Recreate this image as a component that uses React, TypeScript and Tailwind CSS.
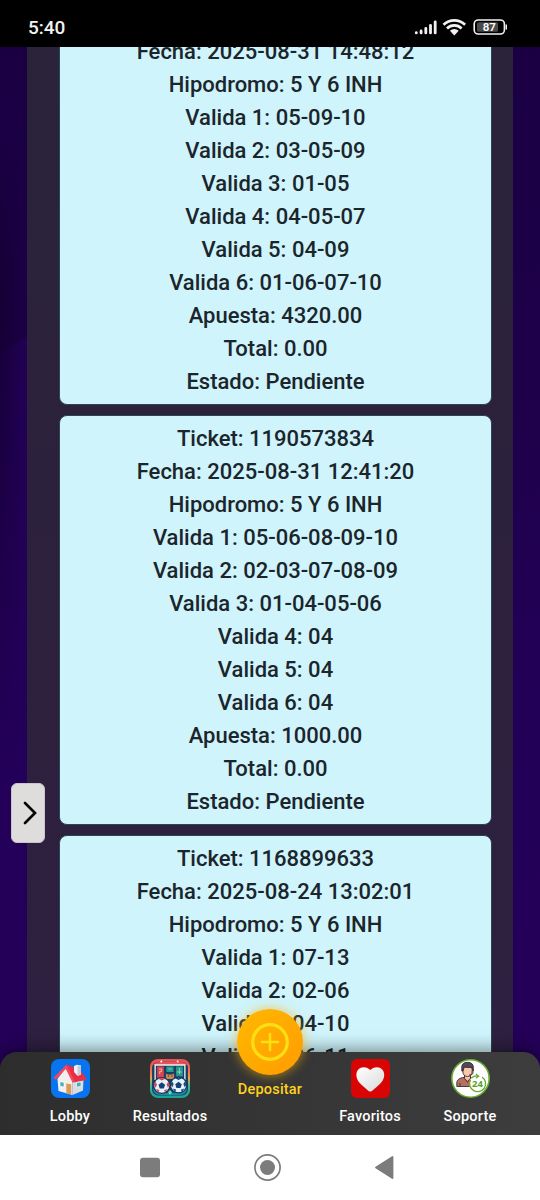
import React from "react";

const tickets: string[][] = [
  [
    "Fecha: 2025-08-31 14:48:12",
    "Hipodromo: 5 Y 6 INH",
    "Valida 1: 05-09-10",
    "Valida 2: 03-05-09",
    "Valida 3: 01-05",
    "Valida 4: 04-05-07",
    "Valida 5: 04-09",
    "Valida 6: 01-06-07-10",
    "Apuesta: 4320.00",
    "Total: 0.00",
    "Estado: Pendiente",
  ],
  [
    "Ticket: 1190573834",
    "Fecha: 2025-08-31 12:41:20",
    "Hipodromo: 5 Y 6 INH",
    "Valida 1: 05-06-08-09-10",
    "Valida 2: 02-03-07-08-09",
    "Valida 3: 01-04-05-06",
    "Valida 4: 04",
    "Valida 5: 04",
    "Valida 6: 04",
    "Apuesta: 1000.00",
    "Total: 0.00",
    "Estado: Pendiente",
  ],
  [
    "Ticket: 1168899633",
    "Fecha: 2025-08-24 13:02:01",
    "Hipodromo: 5 Y 6 INH",
    "Valida 1: 07-13",
    "Valida 2: 02-06",
    "Valida 3: 04-10",
    "Valida 4: 06-11",
  ],
];

function StatusIcons() {
  return (
    <svg width="94" height="20" viewBox="413 17 94 20" fill="none">
      <g stroke="#f2f2f2" strokeWidth="2.8" strokeLinecap="round">
        <path d="M416.3 32.6v.3M421.1 31v1.9M425.8 28.3v4.6M430.5 25.3v7.6M435.2 21.8v11.1" />
      </g>
      <g stroke="#f2f2f2" strokeWidth="2.7">
        <path d="M443.5 24.7a15.5 15.5 0 0 1 21.6 0" />
        <path d="M447 28.5a10.3 10.3 0 0 1 14.6 0" />
      </g>
      <path d="M449.9 30.8a6.3 6.3 0 0 1 8.8 0l-4.4 4.7z" fill="#f2f2f2" />
      <rect x="474.2" y="20" width="30.2" height="14" rx="4" stroke="#f2f2f2" strokeWidth="1.6" />
      <rect x="477" y="22.3" width="21" height="9.4" rx="1.5" fill="#4a4a4a" />
      <path d="M506.4 24.5v5" stroke="#f2f2f2" strokeWidth="1.7" />
      <text x="489.3" y="31.1" textAnchor="middle" fill="#fff" fontSize="11.5" fontWeight="600" fontFamily="Roboto, sans-serif">87</text>
    </svg>
  );
}

function HouseIcon() {
  return (
    <svg width="39" height="39" viewBox="0 0 39 39">
      <rect width="39" height="39" rx="8" fill="#0874ef" />
      <path d="M14.500 9L6.500 20L7.500 32L21.500 36V21z" fill="#f3efec" />
      <path d="M21.500 21L32.500 20L32 31.500L21.500 36z" fill="#dcdadd" />
      <path d="M15.500 5.500L29 10.500L36 20.800L22.500 23.500z" fill="#e92f48" />
      <path d="M15.500 5.500L2.300 19L5 20.500L14.800 10L21.500 23.600L23.800 22.800z" fill="#f5475a" />
      <path d="M23 7l3-1.300 4 .8v9.300l-3.500 1L23 13z" fill="#eef1f6" />
      <path d="M26.500 7.500l3.500-1v9.300l-3.500 1z" fill="#c5cbd8" />
      <path d="M15.300 24.500l5 .8V35.500l-5-1.300z" fill="#dc9a58" />
      <path d="M9 22.700l4 .7v4.500l-4-.8zM25.500 23.600l4.500-.7v4.400l-4.500.9z" fill="#47aeb9" stroke="#fff" strokeWidth=".6" />
    </svg>
  );
}

function Ball({ x, y, c }: { x: number; y: number; c: string }) {
  return (
    <g transform={`translate(${x} ${y})`}>
      <circle r="7.900" fill="#e3f3f8" stroke="#123262" strokeWidth="1.100" />
      <path d="M0-3.200L3.200-.8L2 2.900H-2L-3.200-.8z" fill="#173f78" />
      <path d="M-3.600-6.800L0-7.600l3.600.8L0-4.900zM6.500-4l1.200 3.600L6 2.300 4.700-1zM-6.500-4l-1.200 3.600L-6 2.300-4.700-1zM2.400 4.400l3.300-.8-2.500 3.700zM-2.400 4.400l-3.300-.8 2.500 3.700z" fill={c} />
    </g>
  );
}

function ResultsIcon() {
  return (
    <svg width="40" height="39" viewBox="0 0 39 39" preserveAspectRatio="none">
      <defs>
        <linearGradient id="edge" x1="0" y1="0" x2="0" y2="1">
          <stop offset="0" stopColor="#ef4c55" />
          <stop offset=".3" stopColor="#f0714f" />
          <stop offset=".5" stopColor="#e5a44c" />
          <stop offset=".68" stopColor="#3db893" />
          <stop offset="1" stopColor="#17a39c" />
        </linearGradient>
      </defs>
      <rect width="39" height="39" rx="8" fill="url(#edge)" />
      <rect x="2" y="2.800" width="35" height="33.700" rx="6" fill="#1c3c62" />
      <path d="M3 6q2-3 5-3h23q4 0 5 3z" fill="#e8525c" />
      <path d="M5 21V6h29v15" fill="none" stroke="#eef4ee" strokeWidth="1.300" />
      <rect x="7" y="7.500" width="6.500" height="11.500" fill="#dc4454" />
      <path d="M9 10h2.300v2.500H9.500V15" fill="none" stroke="#f7b7a1" strokeWidth=".9" />
      <path d="M16 7.500h7v5.500h-7zM25.500 7.500h6.500v10h-6.500z" fill="#259c90" />
      <path d="M18 10h3M28.700 9v6M26 13h5" stroke="#8bd6bd" strokeWidth=".9" />
      <path d="M15.500 14.500l2 1h4l2-1v5.500h-8z" fill="#c98755" />
      <path d="M17.500 17h1M21 17h1" stroke="#3b2b36" />
      <path d="M3 29q0 7 7 7h19q7 0 7-7-8 7-16.500 4Q11 36 3 29z" fill="#1e8d99" />
      <circle cx="11" cy="2.500" r="1" fill="#fff" />
      <circle cx="27" cy="2.500" r="1" fill="#ffdcdc" />
      <Ball x={11.500} y={26.500} c="#dd4050" />
      <Ball x={27.800} y={26} c="#1b4a85" />
      <path d="M19.500 31l2 2.300-2 2.700-2-2.700z" fill="#53dfc2" />
    </svg>
  );
}

function HeartIcon() {
  return (
    <svg width="39" height="39" viewBox="0 0 39 39">
      <defs>
        <linearGradient id="heart" x1="0" y1="0" x2="1" y2="1">
          <stop offset="0" stopColor="#fff" />
          <stop offset="1" stopColor="#d9d9d9" />
        </linearGradient>
      </defs>
      <rect width="39" height="39" rx="6" fill="#d90505" />
      <path d="M19.300 32.500c-1.500 0-3.500-2-7.400-5.500C8 23.500 5.400 20.300 5.400 15.900c0-4.400 3.100-7.600 7.200-7.600 2.900 0 5.100 1.200 6.700 2.700 1.600-1.500 3.800-2.700 6.700-2.700 4.100 0 7.200 3.200 7.200 7.600 0 4.400-2.600 7.600-6.500 11.100-3.900 3.500-5.900 5.500-7.400 5.500z" fill="url(#heart)" />
    </svg>
  );
}

function SupportIcon() {
  return (
    <svg width="39" height="39" viewBox="0 0 39 39">
      <circle cx="19.500" cy="19.500" r="18.700" fill="#fff" stroke="#65ab2d" strokeWidth="1.600" />
      <g stroke="#3b2a30" strokeWidth=".9" strokeLinejoin="round">
        <path d="M5.800 27.500V24c0-3 2-4.500 6-5.500h8c3 .7 4 2 4 4v5z" fill="#b5705f" />
        <path d="M13.500 15.500v3.800l3 3.200 3-3.200v-3.800" fill="#f6c4a7" />
        <path d="M13 18.800l3.500 4.700 3.500-4.700" fill="none" stroke="#8e2e35" />
        <path d="M11.800 8h9.400v4c0 3.800-2 5.500-4.700 5.500S11.800 15.800 11.800 12z" fill="#f9c8aa" />
        <path d="M10.800 12V8c0-3 2.200-4.700 5.700-4.700S22.300 5 22.300 8v4l-1.800-3.500c-3 0-5.500 0-7-1L12 12z" fill="#504a55" />
        <path d="M22 11.500v2.300c0 1.700-1.500 2.200-4 2.200" fill="none" />
        <path d="M9 24v3M20 23v4" />
      </g>
      <circle cx="26.500" cy="24.500" r="8.300" fill="#fff" />
      <path d="M31 18a8 8 0 1 1-11.500 3" fill="none" stroke="#65ab2d" strokeWidth="1.300" />
      <path d="M20.500 19q2.500-2.500 6.500-2m-2.200-2l3 2.200-3 2" fill="none" stroke="#65ab2d" strokeWidth="1.100" />
      <text x="26.500" y="28" textAnchor="middle" fontFamily="Open Sans, sans-serif" fontWeight="700" fontSize="9.500" fill="#5a9f29">24</text>
    </svg>
  );
}

function NavItem({ icon, label }: { icon: React.ReactNode; label: string }) {
  return (
    <div className="flex flex-col items-center pt-[7px]">
      {icon}
      <span className="mt-2 text-[14.5px] leading-[21px] font-medium tracking-[0.2px] text-white">{label}</span>
    </div>
  );
}

export default function App() {
  return (
    <div className="flex h-[1200px] w-[540px] flex-col overflow-hidden bg-black font-['Roboto',sans-serif]">
      <header className="flex h-[47px] shrink-0 items-start justify-between bg-black pt-[17px] pr-[33px] pl-7">
        <span className="text-[19px] leading-[21px] font-medium text-[#f2f2f2]">5:40</span>
        <StatusIcons />
      </header>

      <main className="relative h-[1088px] shrink-0 overflow-hidden bg-[linear-gradient(180deg,#1a0043_0%,#1e004b_35%,#220056_55%,#250059_100%)]">
        <svg className="absolute top-0 left-0" width="27" height="1088">
          <defs>
            <linearGradient id="shade" x1="0" x2="1" y1="0" y2="0">
              <stop offset="0" stopColor="#13002f" stopOpacity=".8" />
              <stop offset="1" stopColor="#13002f" stopOpacity="0.050" />
            </linearGradient>
            <linearGradient id="fade" x1="0" x2="0" y1="0" y2="1">
              <stop offset="0" stopColor="#000" />
              <stop offset=".25" stopColor="#fff" />
              <stop offset=".6" stopColor="#888" />
              <stop offset="1" stopColor="#000" />
            </linearGradient>
            <linearGradient id="facet" x1="0" x2="0" y1="0" y2="1">
              <stop offset="0" stopColor="#260060" stopOpacity=".7" />
              <stop offset="1" stopColor="#260060" stopOpacity="0" />
            </linearGradient>
            <mask id="soft"><rect y="80" width="27" height="660" fill="url(#fade)" /></mask>
          </defs>
          <path d="M0 306L27 290V1000H0z" fill="url(#facet)" />
          <rect y="80" width="27" height="660" fill="url(#shade)" mask="url(#soft)" />
        </svg>
        <div className="relative ml-[27px] h-full w-[486px] bg-[linear-gradient(180deg,#2a233a_0%,#2c213c_40%,#2e2041_100%)] pr-[21px] pl-8">
          <div className="flex flex-col gap-[10px]">
            {tickets.map((lines, i) => (
              <section
                key={i}
                className="rounded-[8px] border border-[#294654] bg-[#cff4fc] py-[6px] text-center text-[22px] leading-[33px] font-medium text-[#1b252b] first:-mt-[12px] first:rounded-t-none first:border-t-0 first:pt-0 last:h-[300px]"
              >
                {lines.map((line) => (
                  <p key={line}>{line}</p>
                ))}
              </section>
            ))}
          </div>
        </div>

        <button aria-label="Abrir" className="absolute top-[736px] left-[11px] flex h-[60px] w-[34px] items-center justify-center rounded-[6px] border border-[#c9c5c8] bg-[#dfdddb]">
          <svg width="14" height="24" viewBox="0 0 14 24" className="ml-1" fill="none">
            <path d="M2 2l10 10L2 22" stroke="#080808" strokeWidth="2.700" strokeLinecap="round" />
          </svg>
        </button>

        <nav className="absolute bottom-0 left-0 grid h-[83px] w-full grid-cols-5 rounded-t-[17px] bg-[linear-gradient(90deg,#2d2d2d,#3d3d3d)] px-5 shadow-[0_-4px_16px_rgba(0,0,0,0.4)]">
          <NavItem icon={<HouseIcon />} label="Lobby" />
          <NavItem icon={<ResultsIcon />} label="Resultados" />
          <div className="flex flex-col items-center">
            <div className="-mt-[43px] flex h-[66px] w-[66px] shrink-0 items-center justify-center rounded-full bg-[linear-gradient(135deg,#ffb900,#ff9b00)] shadow-[0_0_12px_rgba(255,180,0,0.7)]">
              <svg width="40" height="40" viewBox="0 0 40 40" fill="none">
                <circle cx="20" cy="20" r="17.300" stroke="#ffdf13" strokeWidth="3.200" />
                <path d="M20 12v16M12 20h16" stroke="#ffdf13" strokeWidth="2.500" strokeLinecap="round" />
              </svg>
            </div>
            <span className="mt-1 text-[14.5px] leading-[21px] font-medium tracking-[0.2px] text-[#ffd21a]">Depositar</span>
          </div>
          <NavItem icon={<HeartIcon />} label="Favoritos" />
          <NavItem icon={<SupportIcon />} label="Soporte" />
        </nav>
      </main>

      <footer className="flex h-[65px] shrink-0 items-start bg-white pt-[18px] pl-[140px]">
        <svg width="256" height="29" viewBox="0 0 256 29">
          <rect y="4.700" width="20" height="19.500" rx="3" fill="#7c7c7c" />
          <circle cx="127.500" cy="14.500" r="12.600" fill="none" stroke="#7c7c7c" strokeWidth="1.700" />
          <circle cx="127.500" cy="14.500" r="7.500" fill="#7c7c7c" />
          <path d="M236 14.500L252.500 4v21z" fill="#7c7c7c" stroke="#7c7c7c" strokeWidth="1.800" strokeLinejoin="round" />
        </svg>
      </footer>
    </div>
  );
}
